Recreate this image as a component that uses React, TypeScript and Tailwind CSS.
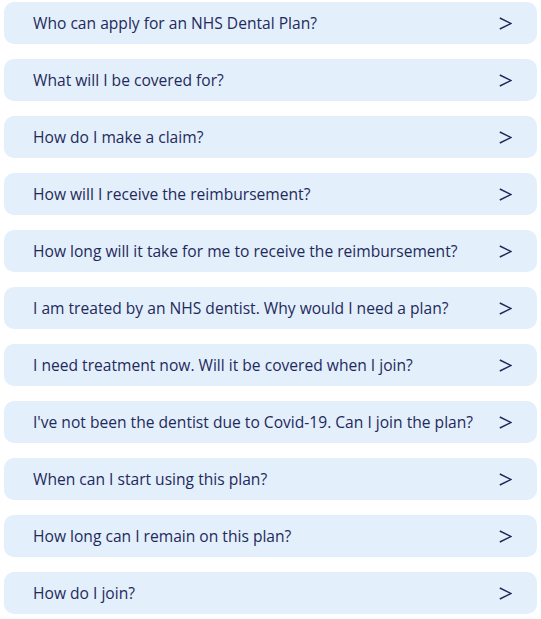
import React from "react";

const questions = [
  "Who can apply for an NHS Dental Plan?",
  "What will I be covered for?",
  "How do I make a claim?",
  "How will I receive the reimbursement?",
  "How long will it take for me to receive the reimbursement?",
  "I am treated by an NHS dentist. Why would I need a plan?",
  "I need treatment now. Will it be covered when I join?",
  "I've not been the dentist due to Covid-19. Can I join the plan?",
  "When can I start using this plan?",
  "How long can I remain on this plan?",
  "How do I join?",
];

export default function App() {
  return (
    <div
      className="min-h-screen bg-white px-[4px] pt-[2px] flex flex-col gap-[15px]"
      style={{ fontFamily: '"Open Sans", sans-serif' }}
    >
      {questions.map((q) => (
        <div
          key={q}
          className="h-[42px] w-[533px] rounded-[10px] bg-[#e3effb] flex items-center justify-between pl-[29px] pr-[25px] text-[#1f2a5c]"
        >
          <span className="text-[15.6px] leading-none pt-[1px]">{q}</span>
          <svg width="13" height="13" viewBox="0 0 13 13" className="shrink-0">
            <polyline
              points="0.8,1 12,6.5 0.8,12"
              fill="none"
              stroke="#1f2a5c"
              strokeWidth="1.5"
              strokeLinejoin="miter"
            />
          </svg>
        </div>
      ))}
    </div>
  );
}
